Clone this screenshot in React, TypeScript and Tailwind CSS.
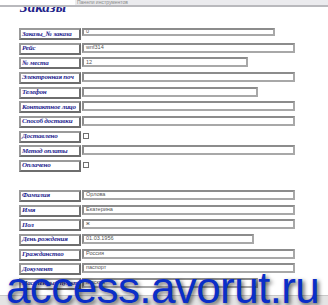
import React from "react";

type Row = { label: string; value?: string; width?: number; check?: boolean; short?: boolean };

const orderRows: Row[] = [
  { label: "Заказы_№ заказа", value: "0", width: 193, short: true },
  { label: "Рейс", value: "wnf314", width: 213 },
  { label: "№ места", value: "12", width: 166 },
  { label: "Электронная поч", width: 213 },
  { label: "Телефон", width: 176 },
  { label: "Контактное лицо", width: 213 },
  { label: "Способ доставки", width: 213 },
  { label: "Доставлено", check: true },
  { label: "Метод оплаты", width: 213 },
  { label: "Оплачено", check: true },
];

const personRows: Row[] = [
  { label: "Фамилия", value: "Орлова", width: 213 },
  { label: "Имя", value: "Екатерина", width: 213 },
  { label: "Пол", value: "ж", width: 213 },
  { label: "День рождения", value: "01.03.1956", width: 172 },
  { label: "Гражданство", value: "Россия", width: 213 },
  { label: "Документ", value: "паспорт", width: 213 },
  { label: "Населенный пункт", value: "Москва", width: 176 },
];

function FieldRow({ row }: { row: Row }) {
  return (
    <div className="flex h-[12px] items-start">
      <div className="flex h-[12px] w-[62px] shrink-0 items-center overflow-hidden whitespace-nowrap border-2 border-t-[#9a9a9a] border-l-[#9a9a9a] border-b-[#6e6e6e] border-r-[#6e6e6e] bg-white pl-[1px] font-['Liberation_Serif',serif] text-[7px] font-bold italic leading-none tracking-[-0.2px] text-[#26268f]">
        {row.label}
      </div>
      {row.check ? (
        <div className="ml-[2px] mt-[2px] h-[6px] w-[6px] border border-[#707070] bg-white" />
      ) : (
        <div
          className={`ml-[1px] flex items-center overflow-hidden whitespace-nowrap border-2 border-t-[#8c8c8c] border-l-[#8c8c8c] border-b-[#a8a8a8] border-r-[#a8a8a8] bg-white pl-[2px] font-['Liberation_Sans',sans-serif] text-[5.5px] leading-none text-[#555] ${row.short ? "h-[8px]" : "h-[10px]"}`}
          style={{ width: row.width }}
        >
          {row.value}
        </div>
      )}
    </div>
  );
}

export default function App() {
  return (
    <div className="relative h-[305px] w-[328px] overflow-hidden bg-white">
      {/* toolbar strip */}
      <div className="relative z-10 flex h-[5px] w-full">
        <div className="w-[75px] bg-white" />
        <div className="flex flex-1 items-center bg-[#ebebee] pl-[2px] font-['Liberation_Sans',sans-serif] text-[5px] leading-none text-[#8a8a8a]">
          Панели инструментов
        </div>
      </div>
      <div className="relative z-10 h-[2px] w-full bg-[#b9b9bd]" />

      {/* title */}
      <div className="mt-[-8px] pl-[20px] font-['Liberation_Serif',serif] text-[15px] font-bold italic leading-[16px] text-[#23238a]">
        Заказы
      </div>

      <div className="mt-[13px] flex flex-col gap-[2.66px] pl-[19px]">
        {orderRows.map((r) => (
          <FieldRow key={r.label} row={r} />
        ))}
      </div>

      <div className="mt-[18px] flex flex-col gap-[2.66px] pl-[19px]">
        {personRows.map((r) => (
          <FieldRow key={r.label} row={r} />
        ))}
      </div>

      {/* status bar */}
      <div className="absolute bottom-0 left-0 h-[10px] w-full border-t border-[#c8c8c8] bg-[#e4e4e4]" />

      {/* watermark */}
      <div className="absolute bottom-[-5px] left-[6px] whitespace-nowrap font-['Liberation_Sans',sans-serif] text-[44px] leading-none tracking-[-0.6px] text-[#0a2ec8] [text-shadow:2px_2px_4px_rgba(0,0,0,0.65)]">
        access.avorut.ru
      </div>
    </div>
  );
}
